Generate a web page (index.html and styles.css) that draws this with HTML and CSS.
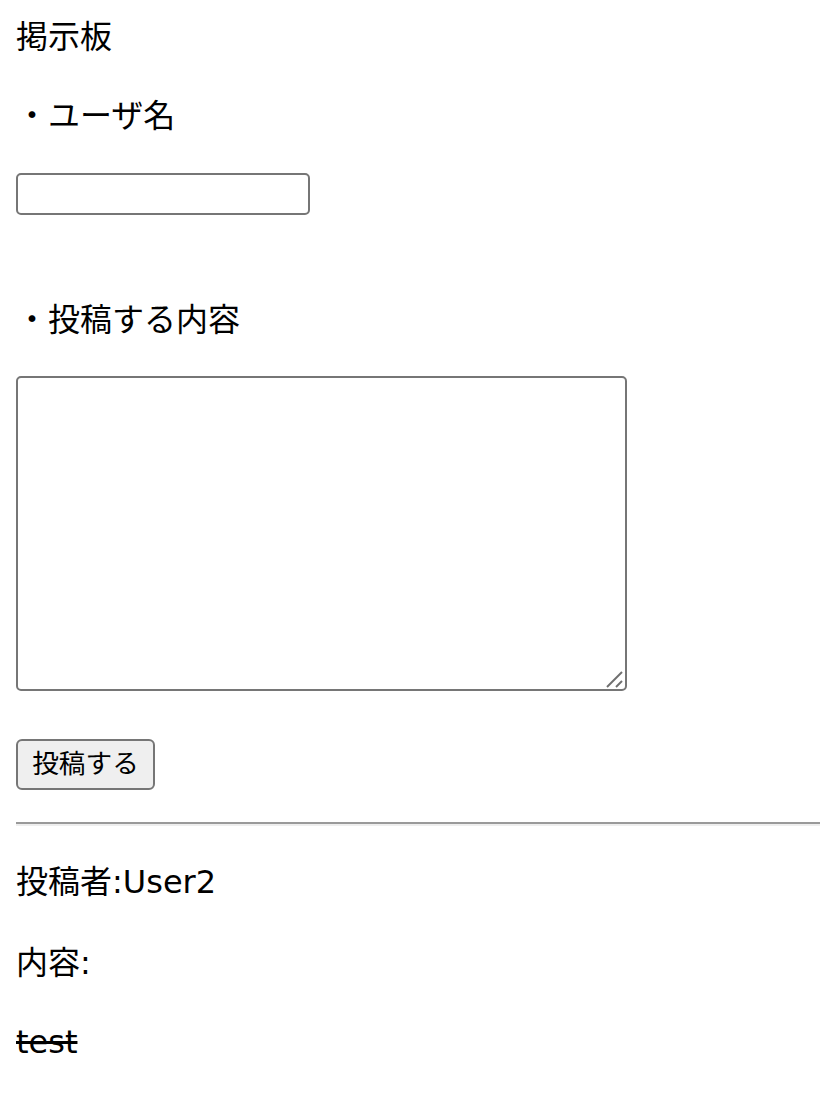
FILE: index.html
```html
<!DOCTYPE html>
<html lang="ja">
<head>
<meta charset="utf-8">
<title>掲示板</title>
<link rel="stylesheet" href="styles.css">
</head>
<body>
<div class="page">
  <div class="title">掲示板</div>
  <form class="post-form">
    <p class="label label-name">・ユーザ名</p>
    <div class="field-name"><input type="text" class="name-input"></div>
    <p class="label label-body">・投稿する内容</p>
    <div class="field-body">
      <textarea class="body-input"></textarea>
      <svg class="grip" width="18" height="18" viewBox="0 0 18 18" aria-hidden="true">
        <line x1="1" y1="17" x2="16" y2="2" stroke="#6f6f6f" stroke-width="2"/>
        <line x1="10" y1="17" x2="16" y2="11" stroke="#6f6f6f" stroke-width="2"/>
      </svg>
    </div>
    <div class="field-submit"><button type="button" class="submit-btn">投稿する</button></div>
  </form>
  <hr class="divider">
  <div class="post">
    <p class="post-line post-author">投稿者:User2</p>
    <p class="post-line post-label">内容:</p>
    <p class="post-line post-text"><s>test</s></p>
  </div>
</div>
</body>
</html>
```

FILE: styles.css
```css
html, body {
  margin: 0;
  padding: 0;
  background: #ffffff;
}
body {
  font-family: "DejaVu Sans", "Noto Sans CJK JP", sans-serif;
  font-size: 32px;
  line-height: 48px;
  color: #000000;
  overflow: hidden;
}
.page {
  padding: 13px 0 0 16px;
}
.title {
  height: 48px;
}
.post-form {
  margin: 0;
}
.label {
  margin: 0;
  height: 48px;
}
.label-name {
  margin-top: 31px;
}
.field-name {
  margin-top: 33px;
  height: 42px;
}
.name-input {
  box-sizing: border-box;
  display: block;
  width: 294px;
  height: 42px;
  margin: 0;
  border: 2px solid #767676;
  border-radius: 5px;
  background: #ffffff;
  font-size: 26px;
  padding: 2px 4px;
}
.label-body {
  margin-top: 81px;
}
.field-body {
  position: relative;
  width: 611px;
  margin-top: 32px;
  height: 315px;
}
.body-input {
  box-sizing: border-box;
  display: block;
  width: 611px;
  height: 315px;
  margin: 0;
  border: 2px solid #767676;
  border-radius: 5px;
  background: #ffffff;
  font-size: 26px;
  padding: 4px;
  resize: none;
}
.grip {
  position: absolute;
  right: 3px;
  bottom: 3px;
  pointer-events: none;
}
.field-submit {
  margin-top: 48px;
  height: 51px;
}
.submit-btn {
  box-sizing: border-box;
  display: block;
  width: 139px;
  height: 51px;
  margin: 0;
  padding: 0 12px;
  border: 2px solid #767676;
  border-radius: 6px;
  background: #efefef;
  color: #000000;
  font-family: "DejaVu Sans", "Noto Sans CJK JP", sans-serif;
  font-size: 26.67px;
  line-height: 1;
}
.divider {
  margin: 32px 0 0 0;
  height: 0;
  border: 0;
  border-top: 2px solid #9a9a9a;
  border-bottom: 2px solid #eeeeee;
}
.post-line {
  margin: 0;
  height: 48px;
}
.post-author {
  margin-top: 32px;
}
.post-label {
  margin-top: 33px;
}
.post-text {
  margin-top: 31px;
}
```
